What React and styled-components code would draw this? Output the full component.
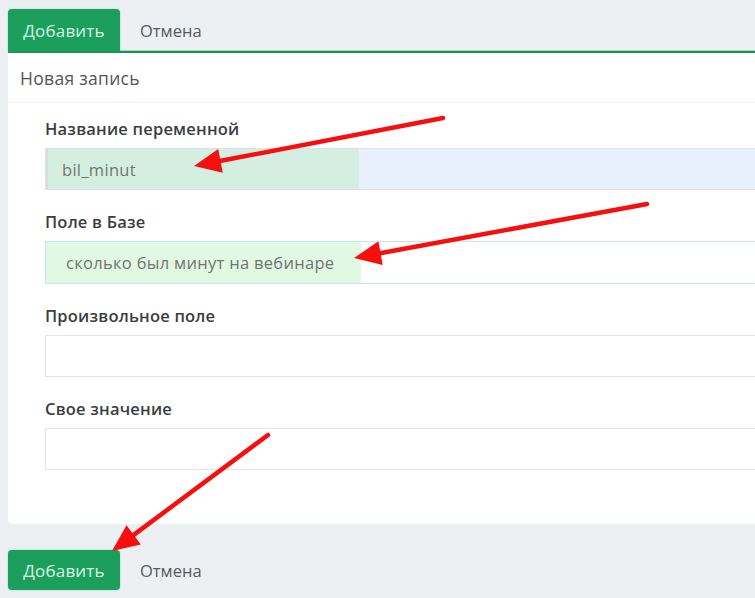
import React from 'react';
import styled, { createGlobalStyle } from 'styled-components';

const GlobalStyle = createGlobalStyle`
    html, body {
        margin: 0;
        padding: 0;
        background: #edf0f3;
        overflow: hidden;
    }
    * {
        box-sizing: border-box;
    }
`;

const Page = styled.div`
    position: relative;
    width: 790px;
    height: 598px;
    padding: 9px 0 0 8px;
    font-family: 'Open Sans', 'Noto Sans', sans-serif;
`;

const Toolbar = styled.div`
    display: flex;
    align-items: center;
    margin-top: ${p => p.$top || 0}px;
`;

const PrimaryButton = styled.button`
    height: ${p => p.$tab ? 42 : 40}px;
    width: 112px;
    border: 0;
    border-radius: ${p => p.$tab ? '4px 4px 0 0' : '4px'};
    background: #1c9f5d;
    color: #d6f5e3;
    font-family: inherit;
    font-size: 17px;
    letter-spacing: 0.2px;
    padding: 0;
    box-shadow: 0 0 2px rgba(40, 200, 120, 0.5);
`;

const CancelButton = styled.button`
    border: 0;
    background: transparent;
    color: #555a60;
    font-family: inherit;
    font-size: 16.5px;
    padding: 0 0 0 20px;
`;

const Panel = styled.div`
    background: #fff;
    border-top: 2px solid #1f8f55;
    border-radius: 0 0 0 4px;
    box-shadow: 0 -1px 0 #8be3b4;
    height: 473px;
`;

const PanelHeader = styled.div`
    height: 50px;
    display: flex;
    align-items: center;
    padding-left: 12px;
    border-bottom: 1px solid #eef0f2;
    color: #555;
    font-size: 17.5px;
    letter-spacing: 0.3px;
`;

const PanelBody = styled.div`
    padding: 16px 0 0 37px;
    display: flex;
    flex-direction: column;
`;

const Field = styled.div`
    display: flex;
    flex-direction: column;
    margin-bottom: 22px;
`;

const Label = styled.div`
    height: 20px;
    line-height: 20px;
    font-size: 16.5px;
    font-weight: 600;
    color: #3b3d40;
    margin-bottom: 9px;
    letter-spacing: 0.2px;
`;

const InputBox = styled.div`
    position: relative;
    height: ${p => p.$h || 42}px;
    border: 1px solid ${p => p.$border || '#e4e7ea'};
    background: ${p => p.$bg || '#fff'};
    display: flex;
    align-items: center;
`;

const Highlight = styled.div`
    height: 100%;
    width: ${p => p.$w}px;
    background: ${p => p.$color};
    display: flex;
    align-items: center;
    padding-left: ${p => p.$pad}px;
    color: #6e7672;
    font-size: 16.5px;
    letter-spacing: 0.3px;
    white-space: nowrap;
    border-left: ${p => p.$edge ? '2px solid #d6dcdf' : '0'};
`;

const Arrows = styled.svg`
    position: absolute;
    left: 0;
    top: 0;
    pointer-events: none;
`;

const arrows = [
    { from: [443, 118], to: [194, 166] },
    { from: [647, 204], to: [354, 258] },
    { from: [268, 435], to: [112, 551] },
];

const head = (from, to, len = 27, half = 12) => {
    const dx = to[0] - from[0];
    const dy = to[1] - from[1];
    const d = Math.hypot(dx, dy);
    const ux = dx / d, uy = dy / d;
    const bx = to[0] - ux * len, by = to[1] - uy * len;
    const px = -uy * half, py = ux * half;
    return {
        points: `${to[0]},${to[1]} ${bx + px},${by + py} ${bx - px},${by - py}`,
        base: [bx + ux * 2, by + uy * 2],
    };
};

const App = () => {
    return (
        <Page>
            <GlobalStyle />
            <Toolbar>
                <PrimaryButton $tab>Добавить</PrimaryButton>
                <CancelButton>Отмена</CancelButton>
            </Toolbar>
            <Panel>
                <PanelHeader>Новая запись</PanelHeader>
                <PanelBody>
                    <Field>
                        <Label>Название переменной</Label>
                        <InputBox $bg="#e8effd" $border="#dde1e6">
                            <Highlight $w={313} $color="#d4efe1" $pad={14} $edge>bil_minut</Highlight>
                        </InputBox>
                    </Field>
                    <Field>
                        <Label>Поле в Базе</Label>
                        <InputBox $h={43} $border="#c9e5ec">
                            <Highlight $w={315} $color="#e1f8e3" $pad={20}>сколько был минут на вебинаре</Highlight>
                        </InputBox>
                    </Field>
                    <Field>
                        <Label>Произвольное поле</Label>
                        <InputBox />
                    </Field>
                    <Field>
                        <Label>Свое значение</Label>
                        <InputBox />
                    </Field>
                </PanelBody>
            </Panel>
            <Toolbar $top={26}>
                <PrimaryButton>Добавить</PrimaryButton>
                <CancelButton>Отмена</CancelButton>
            </Toolbar>
            <Arrows width="755" height="598">
                {arrows.map((a, i) => {
                    const h = head(a.from, a.to);
                    return (
                        <g key={i}>
                            <line x1={a.from[0]} y1={a.from[1]} x2={h.base[0]} y2={h.base[1]} stroke="#f50f0f" strokeWidth="4.5" strokeLinecap="round" />
                            <polygon points={h.points} fill="#f50f0f" />
                        </g>
                    );
                })}
            </Arrows>
        </Page>
    );
};

export default App;
